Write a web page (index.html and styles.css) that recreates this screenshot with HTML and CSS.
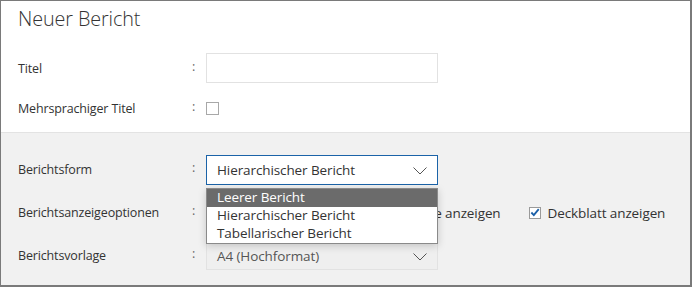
FILE: index.html
```html
<!DOCTYPE html>
<html lang="de">
<head>
<meta charset="utf-8">
<link rel="stylesheet" href="styles.css">
</head>
<body>
<div class="dialog">
  <div class="header">Neuer Bericht</div>
  <div class="section white">
    <div class="row r40">
      <div class="label">Titel</div>
      <div class="colon">:</div>
      <div class="field"><div class="textbox"></div></div>
    </div>
    <div class="row r40">
      <div class="label">Mehrsprachiger Titel</div>
      <div class="colon">:</div>
      <div class="field"><span class="cb"></span></div>
    </div>
  </div>
  <div class="section gray">
    <div class="row r43">
      <div class="label">Berichtsform</div>
      <div class="colon">:</div>
      <div class="field">
        <div class="select focus">
          <span>Hierarchischer Bericht</span>
          <svg class="chev" width="14" height="8" viewBox="0 0 14 8"><path d="M0.5 0.5 L7 7 L13.5 0.5" fill="none" stroke="#555" stroke-width="1"/></svg>
          <ul class="dropdown">
            <li class="sel">Leerer Bericht</li>
            <li>Hierarchischer Bericht</li>
            <li>Tabellarischer Bericht</li>
          </ul>
        </div>
      </div>
    </div>
    <div class="row r43">
      <div class="label">Berichtsanzeigeoptionen</div>
      <div class="colon">:</div>
      <div class="field opts">
        <label class="opt"><span class="cb chk"><svg width="11" height="11" viewBox="0 0 11 11"><path d="M1.5 5.5 L4.2 8.3 L9.6 1.8" fill="none" stroke="#1a5fa8" stroke-width="2"/></svg></span>Kopfzeile anzeigen</label>
        <label class="opt"><span class="cb chk"><svg width="11" height="11" viewBox="0 0 11 11"><path d="M1.5 5.5 L4.2 8.3 L9.6 1.8" fill="none" stroke="#1a5fa8" stroke-width="2"/></svg></span>Fußzeile anzeigen</label>
        <label class="opt"><span class="cb chk"><svg width="11" height="11" viewBox="0 0 11 11"><path d="M1.5 5.5 L4.2 8.3 L9.6 1.8" fill="none" stroke="#1a5fa8" stroke-width="2"/></svg></span>Deckblatt anzeigen</label>
      </div>
    </div>
    <div class="row r43">
      <div class="label">Berichtsvorlage</div>
      <div class="colon">:</div>
      <div class="field">
        <div class="select plain">
          <span>A4 (Hochformat)</span>
          <svg class="chev" width="14" height="8" viewBox="0 0 14 8"><path d="M0.5 0.5 L7 7 L13.5 0.5" fill="none" stroke="#555" stroke-width="1"/></svg>
        </div>
      </div>
    </div>
  </div>
</div>
</body>
</html>
```

FILE: styles.css
```css
* { box-sizing: border-box; }
html, body { margin: 0; padding: 0; }
body {
  width: 692px;
  height: 287px;
  font-family: "Open Sans", "Noto Sans", sans-serif;
  font-size: 12.5px;
  color: #333;
  background: #fff;
  overflow: hidden;
}
.dialog {
  width: 692px;
  height: 287px;
  border-top: 1px solid #7a7a7a;
  border-left: 1px solid #7a7a7a;
  border-right: 2px solid #7a7a7a;
  border-bottom: 2px solid #7a7a7a;
  display: flex;
  flex-direction: column;
  overflow: hidden;
}
.header {
  height: 40px;
  padding-left: 17px;
  padding-top: 4px;
  font-size: 19.8px;
  font-weight: 300;
  color: #333;
  letter-spacing: -0.1px;
}
.section { padding-left: 17px; }
.white { padding-top: 7px; height: 91px; background: #fff; }
.gray {
  flex: 1;
  background: #f1f1f1;
  border-top: 1px solid #e3e3e3;
  padding-top: 15px;
}
.row { display: flex; align-items: center; }
.r40 { height: 40px; }
.r43 { height: 43px; }
.label { width: 174px; flex-shrink: 0; letter-spacing: -0.15px; }
.colon { width: 14px; flex-shrink: 0; color: #666; position: relative; top: -2px; }
.field { flex: 1; min-width: 0; display: flex; align-items: center; }
.textbox {
  width: 232px;
  height: 30px;
  border: 1px solid #e2e2e2;
  background: #fff;
}
.cb {
  display: inline-flex;
  align-items: center;
  justify-content: center;
  width: 13px;
  height: 13px;
  border: 1px solid #a8a8a8;
  background: #fff;
  flex-shrink: 0;
}
.select {
  position: relative;
  width: 232px;
  height: 30px;
  display: flex;
  align-items: center;
  padding-left: 10px;
  font-size: 13.5px;
  letter-spacing: -0.1px;
}
.select.focus { background: #fff; border: 1px solid #1b63a8; }
.select.plain { background: #efefef; border: 1px solid #e2e2e2; color: #555; height: 29px; }
.chev { position: absolute; right: 10px; top: 11px; }
.dropdown {
  position: absolute;
  left: -1px;
  top: 32px;
  width: 232px;
  margin: 0;
  padding: 0;
  list-style: none;
  background: #fff;
  border: 1px solid #8a8a8a;
  box-shadow: 0 2px 8px rgba(0,0,0,0.18);
  z-index: 5;
  color: #333;
}
.dropdown li { height: 18px; line-height: 17px; padding-left: 10px; }
.dropdown li.sel { background: #6b6b6b; color: #fff; }
.opts { padding-left: 3px; }
.opt { display: inline-flex; flex-shrink: 0; align-items: center; margin-right: 28px; white-space: nowrap; font-size: 13.5px; letter-spacing: -0.1px; }
.opt .cb { margin-right: 7px; width: 12px; height: 12px; border-color: #9a9a9a; }
```
